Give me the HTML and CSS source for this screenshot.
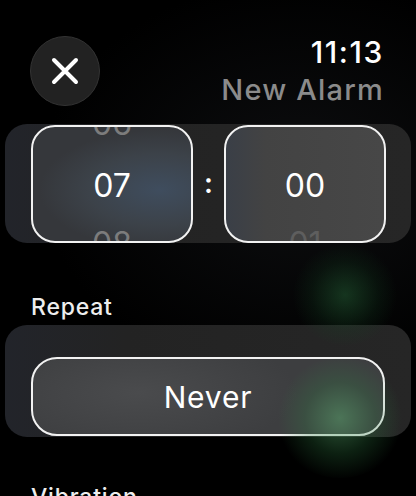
FILE: index.html
```html
<!DOCTYPE html>
<html lang="en">
<head>
    <meta charset="UTF-8">
    <meta name="viewport" content="width=device-width, initial-scale=1.0">
    <title>New Alarm</title>
    <link rel="stylesheet" href="styles.css">
</head>
<body>
    <div class="screen">
        <div class="glow glow-top"></div>
        <div class="glow glow-bottom"></div>

        <header class="top-bar">
            <button class="close-btn" aria-label="Close">
                <svg width="28" height="28" viewBox="0 0 28 28">
                    <path d="M3 3 L25 25 M25 3 L3 25" stroke="#fff" stroke-width="4" stroke-linecap="round"/>
                </svg>
            </button>
            <div class="titles">
                <div class="clock">11:13</div>
                <div class="title">New Alarm</div>
            </div>
        </header>

        <section class="panel picker">
            <div class="wheel wheel-hour">
                <span class="ghost ghost-up">06</span>
                <span class="value">07</span>
                <span class="ghost ghost-down">08</span>
            </div>
            <div class="colon">:</div>
            <div class="wheel wheel-min">
                <span class="value">00</span>
                <span class="ghost ghost-down">01</span>
            </div>
        </section>

        <h3 class="label">Repeat</h3>
        <section class="panel repeat">
            <button class="pill">Never</button>
        </section>

        <h3 class="label">Vibration</h3>
    </div>
</body>
</html>
```

FILE: styles.css
```css
* { box-sizing: border-box; }
html, body { margin: 0; padding: 0; background: #000; }
body { font-family: Inter, "Noto Sans", sans-serif; color: #fff; }

.screen {
    position: relative;
    width: 416px;
    height: 496px;
    overflow: hidden;
    background: radial-gradient(ellipse 260px 200px at 300px 180px, #0d0e10 0%, #000 100%);
}

.glow { position: absolute; border-radius: 50%; pointer-events: none; z-index: 2; }
.glow-top {
    left: 290px; top: 245px; width: 110px; height: 100px;
    background: radial-gradient(circle, rgba(40, 110, 60, 0.45) 0%, rgba(20, 70, 35, 0.2) 45%, rgba(0, 0, 0, 0) 70%);
}
.glow-bottom {
    left: 275px; top: 358px; width: 130px; height: 120px;
    background: radial-gradient(circle, rgba(90, 170, 110, 0.5) 0%, rgba(50, 130, 70, 0.25) 40%, rgba(0, 0, 0, 0) 70%);
}

.top-bar {
    display: flex;
    justify-content: space-between;
    align-items: flex-start;
    padding: 36px 33px 0 30px;
    height: 124px;
}

.close-btn {
    width: 70px;
    height: 70px;
    border-radius: 50%;
    background: #222;
    border: 1px solid #333;
    display: flex;
    align-items: center;
    justify-content: center;
    padding: 0;
}

.titles { text-align: right; margin-top: -2px; margin-right: -1px; }
.clock { font-size: 30px; font-weight: 500; line-height: 36px; letter-spacing: 1.6px; }
.title { font-size: 29px; font-weight: 500; color: #8b8b8b; line-height: 40px; letter-spacing: 1.2px; }

.panel {
    margin: 0 5px;
    border-radius: 22px;
    background: linear-gradient(90deg, #22242a 0%, #232323 30%, #262626 100%);
}

.picker {
    display: flex;
    align-items: center;
    height: 119px;
    padding: 1px 25px 0 26px;
}

.wheel {
    position: relative;
    width: 162px;
    height: 118px;
    border: 2px solid #f2f2f2;
    border-radius: 24px;
    overflow: hidden;
    display: flex;
    align-items: center;
    justify-content: center;
    font-size: 32px;
    line-height: 32px;
    padding-top: 3px;
}
.wheel-hour { background: radial-gradient(ellipse 120px 60px at 80% 55%, #3f4d5e 0%, #3c4249 60%, #35373b 100%); }
.wheel-min { background: linear-gradient(90deg, #3a3f47 0%, #434343 25%, #474747 100%); }

.ghost { position: absolute; left: 0; right: 0; text-align: center; color: #7c7c7c; }
.ghost-up { top: -19px; }
.ghost-down { bottom: -19px; }
.wheel-min .ghost { color: #5e5e5e; }

.colon {
    width: 31px;
    text-align: center;
    font-size: 28px;
    font-weight: 600;
    padding-bottom: 2px;
}

.label {
    margin: 0;
    padding: 46px 31px 0;
    font-size: 23px;
    font-weight: 500;
    line-height: 36px;
    letter-spacing: 0.8px;
    color: #eee;
}

.repeat {
    height: 112px;
    padding: 32px 26px 1px 26px;
}

.pill {
    width: 354px;
    height: 79px;
    border: 2px solid #f2f2f2;
    border-radius: 26px;
    background: radial-gradient(ellipse 160px 60px at 30% 45%, #4a4b4d 0%, #3d3e40 100%);
    color: #fff;
    font-family: inherit;
    font-size: 30px;
    letter-spacing: 0.8px;
}

.repeat + .label { padding-top: 42px; }
```
